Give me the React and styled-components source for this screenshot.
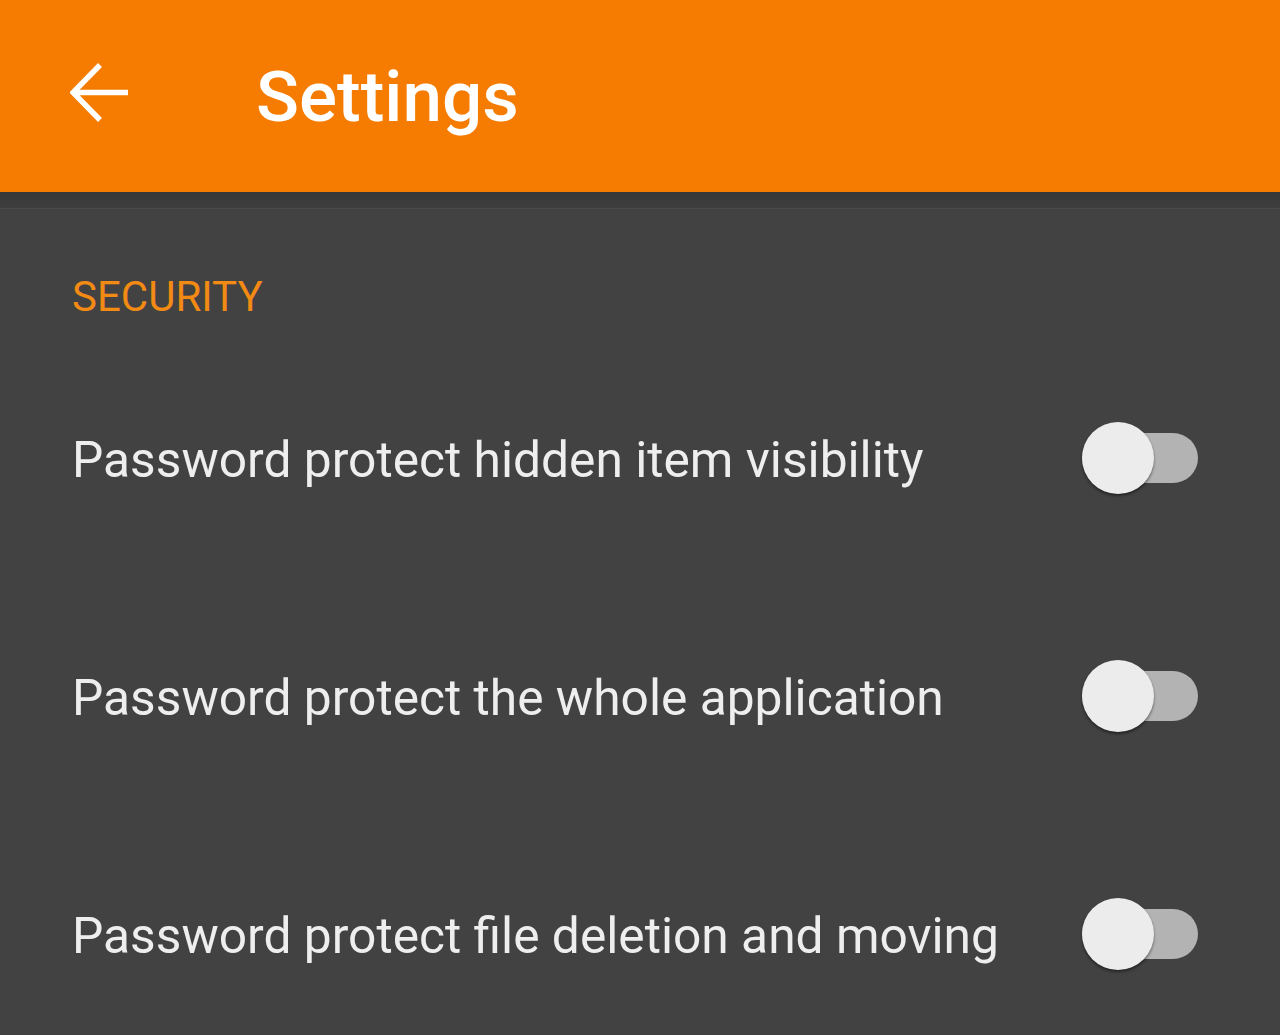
import React, { useState } from "react";
import styled, { createGlobalStyle } from "styled-components";

const GlobalStyle = createGlobalStyle`
    html, body {
        margin: 0;
        padding: 0;
        background: #424242;
        overflow: hidden;
    }
    body {
        font-family: Roboto, "Noto Sans", "Liberation Sans", sans-serif;
    }
`;

const items = [
    "Password protect hidden item visibility",
    "Password protect the whole application",
    "Password protect file deletion and moving",
];

function App() {
    const [checked, setChecked] = useState([false, false, false]);

    const toggle = (i) => {
        const next = [...checked];
        next[i] = !next[i];
        setChecked(next);
    };

    return (
        <Page>
            <GlobalStyle />
            <Toolbar>
                <BackButton aria-label="Back">
                    <svg width="60" height="60" viewBox="0 0 60 60">
                        <path
                            d="M3 29.5H58M30 2L3 29.5L30 57"
                            fill="none"
                            stroke="#ffffff"
                            strokeWidth="5.5"
                        />
                    </svg>
                </BackButton>
                <Title>Settings</Title>
            </Toolbar>
            <Shadow />
            <Content>
                <SectionTitle>SECURITY</SectionTitle>
                {items.map((label, i) => (
                    <Row key={label} onClick={() => toggle(i)}>
                        <Label>{label}</Label>
                        <Switch $on={checked[i]}>
                            <Track $on={checked[i]} />
                            <Thumb $on={checked[i]} />
                        </Switch>
                    </Row>
                ))}
            </Content>
        </Page>
    );
}

export default App;

const Page = styled.div`
    width: 1280px;
    height: 1035px;
    background: #424242;
    display: flex;
    flex-direction: column;
`;
const Toolbar = styled.header`
    height: 192px;
    flex-shrink: 0;
    background: #f57c00;
    display: flex;
    align-items: center;
    padding-left: 70px;
`;
const BackButton = styled.div`
    width: 60px;
    height: 60px;
    margin-top: -7px;
    display: flex;
`;
const Title = styled.h1`
    margin: 0 0 0 126px;
    font-size: 71px;
    line-height: 73px;
    font-weight: 500;
    color: #ffffff;
`;
const Shadow = styled.div`
    height: 16px;
    flex-shrink: 0;
    background: linear-gradient(#383838, #3e3e3e);
    border-bottom: 1px solid #4a4a4a;
`;
const Content = styled.div`
    padding: 60px 82px 0 72px;
    display: flex;
    flex-direction: column;
`;
const SectionTitle = styled.div`
    font-size: 42px;
    line-height: 56px;
    color: #f28a14;
    margin-bottom: 14px;
`;
const Row = styled.div`
    height: 238px;
    display: flex;
    align-items: center;
    justify-content: space-between;
    cursor: pointer;
`;
const Label = styled.div`
    font-size: 49.7px;
    line-height: 58px;
    padding-top: 3px;
    color: #eeeeee;
`;
const Switch = styled.div`
    position: relative;
    width: 116px;
    height: 72px;
    flex-shrink: 0;
`;
const Track = styled.div`
    position: absolute;
    left: 0;
    right: 0;
    top: 11px;
    height: 50px;
    border-radius: 25px;
    background: ${(p) => (p.$on ? "#f5a14b" : "#b3b3b3")};
`;
const Thumb = styled.div`
    position: absolute;
    top: 0;
    left: ${(p) => (p.$on ? "44px" : "0")};
    width: 72px;
    height: 72px;
    border-radius: 50%;
    background: ${(p) => (p.$on ? "#f57c00" : "#ececec")};
    box-shadow: 0 2px 3px rgba(0, 0, 0, 0.45);
`;
